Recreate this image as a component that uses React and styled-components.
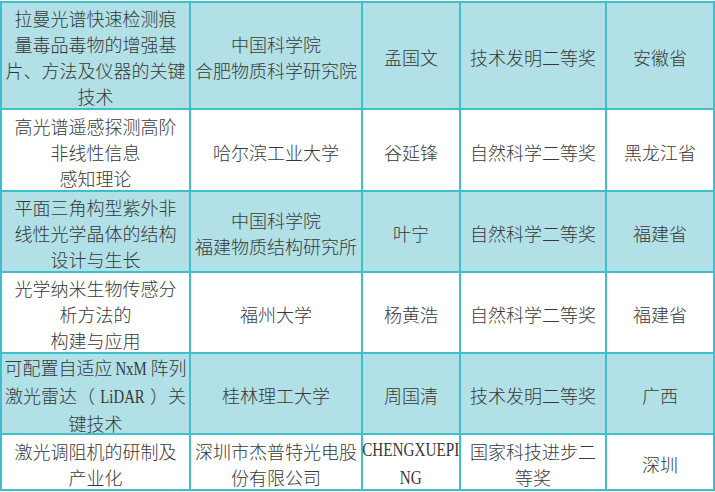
import React from 'react';
import styled, {createGlobalStyle} from 'styled-components';

const GlobalStyle = createGlobalStyle`
    html, body {
        margin: 0;
        padding: 0;
        background: #fff;
    }
`;

const Grid = styled.div`
    display: grid;
    grid-template-columns: 187px 170px 96px 144px 106px;
    grid-template-rows: 105px 80px 79px 79px 79px 54px;
    gap: 2px;
    padding: 2px;
    margin-top: 1px;
    width: max-content;
    background-color: #3fbecb;
    font-family: "Noto Sans CJK SC", "Noto Sans", sans-serif;
    font-weight: 300;
    font-size: 18px;
    line-height: 26px;
    color: #383838;
`;

const Cell = styled.div`
    display: flex;
    align-items: center;
    justify-content: center;
    text-align: center;
    padding-top: 3px;
    white-space: nowrap;
    overflow: visible;
    background-color: ${props => props.$shaded ? '#b1e0e6' : '#fff'};
`;

const Latin = styled.span`
    display: inline-block;
    font-family: "Liberation Serif", serif;
    font-size: 19px;
    transform: scaleX(0.78);
    margin: 0 -1px;
`;

const Block = styled.span`
    display: inline-block;
    font-family: "Liberation Serif", serif;
    font-size: 19px;
    line-height: 28px;
    transform: scaleX(0.8);
`;

const Lines = ({children}) => (
    <span>
        {children.map((line, i) => (
            <React.Fragment key={i}>
                {i > 0 && <br/>}
                {line}
            </React.Fragment>
        ))}
    </span>
);

const rows = [
    {
        title: ['拉曼光谱快速检测痕', '量毒品毒物的增强基', '片、方法及仪器的关键', '技术'],
        org: ['中国科学院', '合肥物质科学研究院'],
        name: '孟国文',
        prize: ['技术发明二等奖'],
        place: '安徽省'
    },
    {
        title: ['高光谱遥感探测高阶', '非线性信息', '感知理论'],
        org: ['哈尔滨工业大学'],
        name: '谷延锋',
        prize: ['自然科学二等奖'],
        place: '黑龙江省'
    },
    {
        title: ['平面三角构型紫外非', '线性光学晶体的结构', '设计与生长'],
        org: ['中国科学院', '福建物质结构研究所'],
        name: '叶宁',
        prize: ['自然科学二等奖'],
        place: '福建省'
    },
    {
        title: ['光学纳米生物传感分', '析方法的', '构建与应用'],
        org: ['福州大学'],
        name: '杨黄浩',
        prize: ['自然科学二等奖'],
        place: '福建省'
    },
    {
        title: [
            <>可配置自适应<Latin>NxM</Latin>阵列</>,
            <>激光雷达（<Latin>LiDAR</Latin>）关</>,
            '键技术'
        ],
        org: ['桂林理工大学'],
        name: '周国清',
        prize: ['技术发明二等奖'],
        place: '广西'
    },
    {
        title: ['激光调阻机的研制及', '产业化'],
        org: ['深圳市杰普特光电股', '份有限公司'],
        name: <Block>CHENGXUEPI<br/>NG</Block>,
        prize: ['国家科技进步二', '等奖'],
        place: '深圳'
    }
];

export default function App() {
    return (
        <>
            <GlobalStyle/>
            <Grid>
                {rows.map((row, i) => {
                    const shaded = i % 2 === 0;
                    return (
                        <React.Fragment key={i}>
                            <Cell $shaded={shaded}><Lines>{row.title}</Lines></Cell>
                            <Cell $shaded={shaded}><Lines>{row.org}</Lines></Cell>
                            <Cell $shaded={shaded}>{row.name}</Cell>
                            <Cell $shaded={shaded}><Lines>{row.prize}</Lines></Cell>
                            <Cell $shaded={shaded}>{row.place}</Cell>
                        </React.Fragment>
                    );
                })}
            </Grid>
        </>
    );
}
